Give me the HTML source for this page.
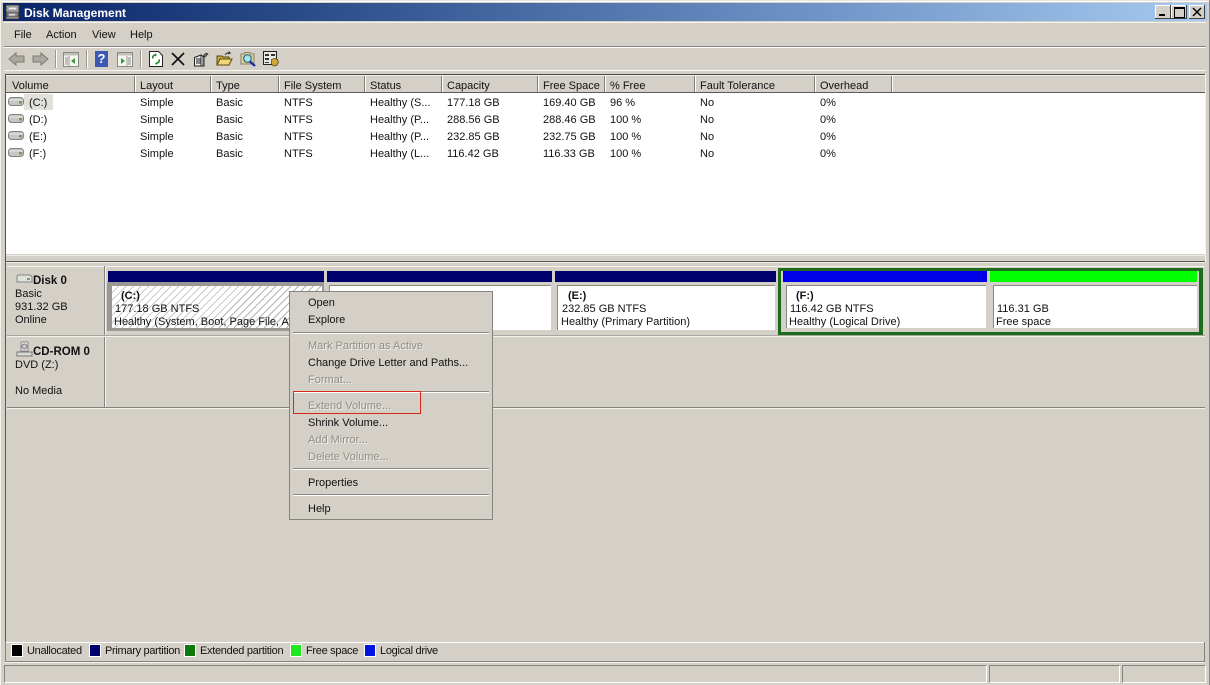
<!DOCTYPE html>
<html><head><meta charset="utf-8"><style>
html,body{margin:0;padding:0}
body{width:1210px;height:685px;overflow:hidden;position:relative;background:#d4d0c8;font-family:"Liberation Sans",sans-serif;font-size:11px;color:#111}
.a,.t{position:absolute}
.t{white-space:nowrap;line-height:13px;height:13px;margin-top:1px}
.m{margin-top:2px}
.l{margin-top:2px;letter-spacing:-.3px}
.b{font-weight:bold}
.g{color:#8f8d88;text-shadow:1px 1px 0 #f0eee8}
.h{position:absolute;top:76px;height:16px;width:1px;background:#7f7d78;box-shadow:1px 0 0 #fff}
.bar{position:absolute;top:271px;height:11px}
.p{position:absolute;background:#fff;box-sizing:border-box}
.sw{position:absolute;top:644px;width:10px;height:11px;border:1px solid #fff}
.ms{position:absolute;left:293px;width:196px;height:1px;background:#8a8884;box-shadow:0 1px 0 #fff}
svg{position:absolute;overflow:visible}
</style></head><body>
<!-- frame -->
<div class="a" style="left:0;top:0;width:1210px;height:1px;background:#e6e4de"></div>
<div class="a" style="left:1px;top:1px;width:1208px;height:1px;background:#fff"></div>
<div class="a" style="left:1209px;top:0;width:1px;height:685px;background:#8a8884"></div>
<div class="a" style="left:0;top:0;width:1px;height:685px;background:#f2f1ec"></div>
<!-- titlebar -->
<div class="a" style="left:3px;top:3px;width:1204px;height:18px;background:linear-gradient(90deg,#0a246a 0%,#2a4c88 25%,#6a90c4 65%,#a6caf0 100%)"></div>
<svg style="left:5px;top:4px" width="16" height="16" viewBox="0 0 16 16"><rect x="1" y="1" width="13" height="14" fill="#b8b8b8" stroke="#333"/><rect x="3" y="3" width="9" height="3" fill="#eee" stroke="#555" stroke-width=".6"/><rect x="2" y="8" width="11" height="5" fill="#888" stroke="#333" stroke-width=".6"/><rect x="4" y="10" width="6" height="1.5" fill="#ddd"/></svg>
<div class="t b" style="left:24px;top:6px;color:#fff;font-size:12px">Disk Management</div>
<div class="a" style="left:1155px;top:5px;width:16px;height:14px;background:#d4d0c8;box-shadow:inset -1px -1px 0 #404040,inset 1px 1px 0 #fff"></div>
<div class="a" style="left:1159px;top:14px;width:6px;height:2px;background:#000"></div>
<div class="a" style="left:1171px;top:5px;width:16px;height:14px;background:#d4d0c8;box-shadow:inset -1px -1px 0 #404040,inset 1px 1px 0 #fff"></div>
<div class="a" style="left:1174px;top:7px;width:9px;height:8px;border:1px solid #000;border-top-width:2px;box-sizing:content-box"></div>
<div class="a" style="left:1189px;top:5px;width:16px;height:14px;background:#d4d0c8;box-shadow:inset -1px -1px 0 #404040,inset 1px 1px 0 #fff"></div>
<svg style="left:1189px;top:5px" width="16" height="14"><path d="M4 3l8 8M12 3l-8 8" stroke="#000" stroke-width="1.500"/></svg>
<!-- menu -->
<div class="a" style="left:4px;top:22px;width:1202px;height:1px;background:#f4f3ee"></div>
<div class="t" style="left:14px;top:28px">File</div>
<div class="t" style="left:46px;top:28px">Action</div>
<div class="t" style="left:92px;top:28px">View</div>
<div class="t" style="left:130px;top:28px">Help</div>
<div class="a" style="left:4px;top:46px;width:1202px;height:1px;background:#85837e"></div>
<div class="a" style="left:4px;top:47px;width:1202px;height:1px;background:#fff"></div>
<!-- toolbar -->
<svg style="left:8px;top:51px" width="46" height="16" viewBox="0 0 46 16"><path d="M1 8l7-6v3h8v6H8v3z" fill="#aaa89f" stroke="#7a7a74"/><path d="M40 8l-7-6v3h-8v6h8v3z" fill="#aaa89f" stroke="#7a7a74"/></svg>
<div class="a" style="left:55px;top:50px;width:1px;height:18px;background:#9a9892;box-shadow:1px 0 0 #fff"></div>
<svg style="left:63px;top:52px" width="16" height="15" viewBox="0 0 16 15"><rect x=".5" y=".5" width="15" height="14" fill="#f4f4f0" stroke="#8a8a84"/><rect x="1" y="1" width="14" height="2.5" fill="#c0c0ba"/><path d="M6 4v10" stroke="#999"/><path d="M12 6v6L8 9z" fill="#3c9a3c"/><path d="M2 6h3M2 8h3M2 10h3M2 12h3" stroke="#888"/></svg>
<div class="a" style="left:86px;top:50px;width:1px;height:18px;background:#9a9892;box-shadow:1px 0 0 #fff"></div>
<div class="a" style="left:95px;top:51px;width:13px;height:16px;background:#3a58b4;color:#fff;font-weight:bold;font-size:13px;line-height:16px;text-align:center">?</div>
<svg style="left:117px;top:52px" width="16" height="15" viewBox="0 0 16 15"><rect x=".5" y=".5" width="15" height="14" fill="#f4f4f0" stroke="#8a8a84"/><rect x="1" y="1" width="14" height="2.5" fill="#c0c0ba"/><path d="M10 4v10" stroke="#999"/><path d="M4 6v6l4-3z" fill="#3c9a3c"/><path d="M11 6h3M11 8h3M11 10h3M11 12h3" stroke="#888"/></svg>
<div class="a" style="left:140px;top:50px;width:1px;height:18px;background:#9a9892;box-shadow:1px 0 0 #fff"></div>
<svg style="left:149px;top:51px" width="14" height="16" viewBox="0 0 14 16"><path d="M.5.5h9l4 4v11H.5z" fill="#fff" stroke="#222"/><path d="M7 3.500a4 3 0 0 0-3 4M7 12.500a4 3 0 0 0 3-4" fill="none" stroke="#1c8a2c" stroke-width="1.600"/><path d="M6 2l2 2-2 1.500zM8 11l-2 1.500 2 1.500z" fill="#1c8a2c"/></svg>
<svg style="left:171px;top:52px" width="14" height="14"><path d="M1 1l12 12M13 1L1 13" stroke="#111" stroke-width="1.700"/></svg>
<svg style="left:193px;top:51px" width="16" height="16" viewBox="0 0 16 16"><path d="M1.500 6.500L8 4v11H1.500z" fill="#eee" stroke="#222"/><path d="M3 8h8M3 10h8M3 12h8" stroke="#222"/><path d="M8 15h3V6L8 4" fill="#999" stroke="#222"/><path d="M10 5l3-3 2 1-3 3z" fill="#777" stroke="#222" stroke-width=".7"/></svg>
<svg style="left:216px;top:51px" width="17" height="16" viewBox="0 0 17 16"><path d="M1 5h5l1 1h6v8H1z" fill="#c8a848" stroke="#5a4a10"/><path d="M1 14l3-6h12l-3 6z" fill="#f0d878" stroke="#5a4a10"/><path d="M9 4q2-3 5-2l-1-1.500M14 2l-2 1" fill="none" stroke="#333"/></svg>
<svg style="left:240px;top:51px" width="17" height="16" viewBox="0 0 17 16"><path d="M1 3h3l1-1.500h5l1 1.500h3v10H1z" fill="#d8d0a8" stroke="#8a8060"/><circle cx="7.500" cy="7.500" r="3.800" fill="#a8e4ec" stroke="#2a6a70" stroke-width="1.200"/><path d="M10 10.500l5 4.500" stroke="#1a2a9a" stroke-width="2.200"/></svg>
<svg style="left:263px;top:51px" width="16" height="16" viewBox="0 0 16 16"><rect x=".5" y=".5" width="13" height="13" fill="#e8e8e2" stroke="#222"/><path d="M2 3h4v2H2zM8 3h4v2H8zM2 7h4v2H2zM2 11h4v1H2z" fill="#333"/><path d="M8.500 8.500l3-1 3 1 1 3-2 3-3 .500-2-2z" fill="#d0a838" stroke="#5a4a10" stroke-width=".8"/></svg>
<div class="a" style="left:4px;top:70px;width:1202px;height:1px;background:#f8f7f3"></div>
<!-- list -->
<div class="a" style="left:5px;top:74px;width:1200px;height:1px;background:#4c4a46"></div>
<div class="a" style="left:5px;top:75px;width:1200px;height:1px;background:#f0efea"></div>
<div class="a" style="left:5px;top:74px;width:1px;height:187px;background:#55534f"></div>
<div class="a" style="left:1205px;top:74px;width:1px;height:188px;background:#f4f3ee"></div>
<div class="a" style="left:5px;top:92px;width:1200px;height:1px;background:#5e5c58"></div>
<div class="a" style="left:6px;top:93px;width:1199px;height:161px;background:#fff"></div>
<div class="a" style="left:6px;top:255px;width:1199px;height:1px;background:#ecebe6"></div>
<div class="a" style="left:5px;top:261px;width:1200px;height:1px;background:#5a5854"></div>
<div class="a" style="left:5px;top:262px;width:1200px;height:1px;background:#eeede8"></div>
<div class="h" style="left:134px"></div><div class="h" style="left:210px"></div><div class="h" style="left:278px"></div><div class="h" style="left:364px"></div><div class="h" style="left:441px"></div><div class="h" style="left:537px"></div><div class="h" style="left:604px"></div><div class="h" style="left:694px"></div><div class="h" style="left:814px"></div><div class="h" style="left:891px"></div>
<div class="t" style="left:12px;top:79px">Volume</div><div class="t" style="left:140px;top:79px">Layout</div><div class="t" style="left:216px;top:79px">Type</div><div class="t" style="left:284px;top:79px">File System</div><div class="t" style="left:370px;top:79px">Status</div><div class="t" style="left:447px;top:79px">Capacity</div><div class="t" style="left:543px;top:79px">Free Space</div><div class="t" style="left:610px;top:79px">% Free</div><div class="t" style="left:700px;top:79px">Fault Tolerance</div><div class="t" style="left:820px;top:79px">Overhead</div>
<div class="a" style="left:24px;top:94px;width:29px;height:16px;background:#e2e0da"></div>
<svg style="left:8px;top:96px" width="16" height="68" viewBox="0 0 16 68"><defs><g id="d"><rect x=".5" y="1.500" width="15" height="8" rx="3" fill="#c6c6c2" stroke="#808080"/><path d="M1 4h14" stroke="#e8e8e4"/><rect x="11" y="5" width="3" height="2.500" fill="#6a9a60"/></g></defs><use href="#d"/><use href="#d" y="17"/><use href="#d" y="34"/><use href="#d" y="51"/></svg>
<div class="t" style="left:29px;top:96px">(C:)</div><div class="t" style="left:29px;top:113px">(D:)</div><div class="t" style="left:29px;top:130px">(E:)</div><div class="t" style="left:29px;top:147px">(F:)</div>
<div class="t" style="left:140px;top:96px">Simple</div><div class="t" style="left:216px;top:96px">Basic</div><div class="t" style="left:284px;top:96px">NTFS</div><div class="t" style="left:370px;top:96px">Healthy (S...</div><div class="t" style="left:447px;top:96px">177.18 GB</div><div class="t" style="left:543px;top:96px">169.40 GB</div><div class="t" style="left:610px;top:96px">96 %</div><div class="t" style="left:700px;top:96px">No</div><div class="t" style="left:820px;top:96px">0%</div>
<div class="t" style="left:140px;top:113px">Simple</div><div class="t" style="left:216px;top:113px">Basic</div><div class="t" style="left:284px;top:113px">NTFS</div><div class="t" style="left:370px;top:113px">Healthy (P...</div><div class="t" style="left:447px;top:113px">288.56 GB</div><div class="t" style="left:543px;top:113px">288.46 GB</div><div class="t" style="left:610px;top:113px">100 %</div><div class="t" style="left:700px;top:113px">No</div><div class="t" style="left:820px;top:113px">0%</div>
<div class="t" style="left:140px;top:130px">Simple</div><div class="t" style="left:216px;top:130px">Basic</div><div class="t" style="left:284px;top:130px">NTFS</div><div class="t" style="left:370px;top:130px">Healthy (P...</div><div class="t" style="left:447px;top:130px">232.85 GB</div><div class="t" style="left:543px;top:130px">232.75 GB</div><div class="t" style="left:610px;top:130px">100 %</div><div class="t" style="left:700px;top:130px">No</div><div class="t" style="left:820px;top:130px">0%</div>
<div class="t" style="left:140px;top:147px">Simple</div><div class="t" style="left:216px;top:147px">Basic</div><div class="t" style="left:284px;top:147px">NTFS</div><div class="t" style="left:370px;top:147px">Healthy (L...</div><div class="t" style="left:447px;top:147px">116.42 GB</div><div class="t" style="left:543px;top:147px">116.33 GB</div><div class="t" style="left:610px;top:147px">100 %</div><div class="t" style="left:700px;top:147px">No</div><div class="t" style="left:820px;top:147px">0%</div>
<!-- lower pane -->
<div class="a" style="left:5px;top:262px;width:1px;height:380px;background:#5a5854"></div>
<div class="a" style="left:7px;top:266px;width:1198px;height:1px;background:#f4f3ee"></div>
<div class="a" style="left:104px;top:266px;width:1px;height:141px;background:#85837e"></div>
<div class="a" style="left:105px;top:266px;width:1px;height:141px;background:#f4f3ee"></div>
<div class="a" style="left:7px;top:336px;width:1198px;height:1px;background:#f4f3ee"></div>
<div class="a" style="left:7px;top:335px;width:1198px;height:1px;background:#a8a6a0"></div>
<div class="a" style="left:7px;top:407px;width:1198px;height:1px;background:#85837e"></div>
<div class="a" style="left:7px;top:408px;width:1198px;height:1px;background:#f4f3ee"></div>
<svg style="left:16px;top:274px" width="17" height="10" viewBox="0 0 17 10"><path d="M1 3q0-2 2-2h10q2 0 3 2v5H1z" fill="#e0e0dc" stroke="#85857f"/><rect x="11" y="4" width="3" height="2" fill="#7a9a70"/></svg>
<div class="t b" style="left:33px;top:274px;font-size:11.500px">Disk 0</div>
<div class="t" style="left:15px;top:287px">Basic</div><div class="t" style="left:15px;top:300px">931.32 GB</div><div class="t" style="left:15px;top:313px">Online</div>
<svg style="left:16px;top:341px" width="17" height="17" viewBox="0 0 17 17"><path d="M1 11h15v4H1z" fill="#d8d8d4" stroke="#777"/><rect x="5" y="1" width="7" height="9" fill="#eee" stroke="#888"/><circle cx="8.500" cy="5.500" r="2.500" fill="#c8c8c4" stroke="#777"/></svg>
<div class="t b" style="left:33px;top:345px;font-size:11.500px">CD-ROM 0</div>
<div class="t" style="left:15px;top:358px">DVD (Z:)</div><div class="t" style="left:15px;top:384px">No Media</div>
<!-- bars -->
<div class="bar" style="left:108px;width:216px;background:#00006e"></div>
<div class="bar" style="left:327px;width:225px;background:#00006e"></div>
<div class="bar" style="left:555px;width:221px;background:#00006e"></div>
<!-- C -->
<div class="a" style="left:107px;top:282px;width:217px;height:49px;background:#9a9894"></div>
<div class="p" style="left:112px;top:286px;width:210px;height:42px;background-color:#fff;background-image:repeating-linear-gradient(135deg,#fff 0,#fff 4.300px,#b4b4b4 4.300px,#b4b4b4 5.300px)"></div>
<div class="t b" style="left:121px;top:289px">(C:)</div>
<div class="t" style="left:115px;top:302px">177.18 GB NTFS</div>
<div class="t" style="left:114px;top:315px">Healthy (System, Boot, Page File, Ac</div>
<!-- D -->
<div class="p" style="left:329px;top:285px;width:222px;height:45px;border-top:1px solid #8a8884;border-left:1px solid #8a8884"></div>
<div class="t b" style="left:340px;top:289px">(D:)</div>
<!-- E -->
<div class="p" style="left:557px;top:285px;width:218px;height:45px;border-top:1px solid #8a8884;border-left:1px solid #8a8884"></div>
<div class="t b" style="left:568px;top:289px">(E:)</div>
<div class="t" style="left:562px;top:302px">232.85 GB NTFS</div>
<div class="t" style="left:561px;top:315px">Healthy (Primary Partition)</div>
<!-- extended -->
<div class="a" style="left:778px;top:268px;width:425px;height:67px;background:#d4d0c8;box-sizing:border-box;border:3px solid #1c6c1c;border-right-width:4px"></div>
<div class="bar" style="left:783px;width:204px;background:#0000e8"></div>
<div class="bar" style="left:990px;width:207px;background:#00ff00"></div>
<div class="p" style="left:786px;top:285px;width:200px;height:43px;border-top:1px solid #8a8884;border-left:1px solid #8a8884"></div>
<div class="p" style="left:993px;top:285px;width:204px;height:43px;border-top:1px solid #8a8884;border-left:1px solid #8a8884"></div>
<div class="t b" style="left:796px;top:289px">(F:)</div>
<div class="t" style="left:790px;top:302px">116.42 GB NTFS</div>
<div class="t" style="left:789px;top:315px">Healthy (Logical Drive)</div>
<div class="t" style="left:997px;top:302px">116.31 GB</div>
<div class="t" style="left:996px;top:315px">Free space</div>
<!-- context menu -->
<div class="a" style="left:289px;top:291px;width:204px;height:229px;background:#d4d0c8;box-sizing:border-box;border:1px solid #85837e"></div>
<div class="t m" style="left:308px;top:295px">Open</div>
<div class="t m" style="left:308px;top:312px">Explore</div>
<div class="ms" style="top:332px"></div>
<div class="t g m" style="left:308px;top:338px">Mark Partition as Active</div>
<div class="t m" style="left:308px;top:355px">Change Drive Letter and Paths...</div>
<div class="t g m" style="left:308px;top:372px">Format...</div>
<div class="ms" style="top:391px"></div>
<div class="t g m" style="left:308px;top:398px">Extend Volume...</div>
<div class="t m" style="left:308px;top:415px">Shrink Volume...</div>
<div class="t g m" style="left:308px;top:432px">Add Mirror...</div>
<div class="t g m" style="left:308px;top:449px">Delete Volume...</div>
<div class="ms" style="top:468px"></div>
<div class="t m" style="left:308px;top:475px">Properties</div>
<div class="ms" style="top:494px"></div>
<div class="t m" style="left:308px;top:501px">Help</div>
<div class="a" style="left:293px;top:391px;width:128px;height:1px;background:#d8281c"></div>
<div class="a" style="left:293px;top:413px;width:128px;height:1px;background:#d8281c"></div>
<div class="a" style="left:293px;top:391px;width:1px;height:23px;background:#d8281c"></div>
<div class="a" style="left:420px;top:391px;width:1px;height:23px;background:#d8281c"></div>
<!-- legend -->
<div class="a" style="left:5px;top:642px;width:1200px;height:1px;background:#fff"></div>
<div class="a" style="left:5px;top:661px;width:1200px;height:1px;background:#85837e"></div>
<div class="a" style="left:5px;top:662px;width:1200px;height:1px;background:#f4f3ee"></div>
<div class="a" style="left:1204px;top:642px;width:1px;height:20px;background:#85837e"></div>
<div class="a" style="left:5px;top:642px;width:1px;height:20px;background:#85837e"></div>
<div class="sw" style="left:11px;background:#000"></div><div class="t l" style="left:27px;top:643px">Unallocated</div>
<div class="sw" style="left:89px;background:#00006e"></div><div class="t l" style="left:105px;top:643px">Primary partition</div>
<div class="sw" style="left:184px;background:#0a780a"></div><div class="t l" style="left:200px;top:643px">Extended partition</div>
<div class="sw" style="left:290px;background:#1ee81e"></div><div class="t l" style="left:306px;top:643px">Free space</div>
<div class="sw" style="left:364px;background:#0014e0"></div><div class="t l" style="left:380px;top:643px">Logical drive</div>
<!-- status -->
<div class="a" style="left:4px;top:665px;width:983px;height:18px;box-sizing:border-box;border:1px solid;border-color:#85837e #fff #fff #85837e"></div>
<div class="a" style="left:989px;top:665px;width:131px;height:18px;box-sizing:border-box;border:1px solid;border-color:#85837e #fff #fff #85837e"></div>
<div class="a" style="left:1122px;top:665px;width:84px;height:18px;box-sizing:border-box;border:1px solid;border-color:#85837e #fff #fff #85837e"></div>
</body></html>
